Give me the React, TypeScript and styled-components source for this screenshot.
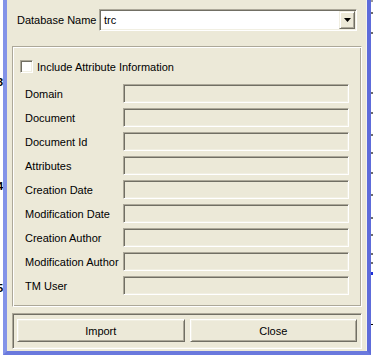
import React from 'react';
import styled, { createGlobalStyle } from 'styled-components';

const GlobalStyle = createGlobalStyle`
  html, body {
    margin: 0;
    padding: 0;
    background: #fff;
  }
  body {
    font-family: "Liberation Sans", Arial, sans-serif;
    font-size: 11px;
    color: #000;
  }
`;

const Screen = styled.div`
  display: flex;
  align-items: flex-start;
  width: 373px;
  height: 358px;
  overflow: hidden;
  background: #fff;
`;

// strip of the window behind, on the left
const Gutter = styled.div`
  width: 3px;
  flex: none;
  display: flex;
  flex-direction: column;
  align-items: flex-end;
  overflow: hidden;
`;

const GutterDigit = styled.span<{ $mt: number }>`
  margin-top: ${p => p.$mt}px;
  font: bold 11px/12px "Liberation Sans", Arial, sans-serif;
  white-space: nowrap;
`;

// strip of the window behind, on the right
const BackStrip = styled.div`
  width: 2px;
  flex: none;
  display: flex;
  flex-direction: column;
`;

const BackMark = styled.span<{ $mt: number; $color?: string; $h?: number }>`
  display: block;
  margin-top: ${p => p.$mt}px;
  height: ${p => p.$h ?? 2}px;
  background: ${p => p.$color ?? '#6d6d6d'};
`;

const Window = styled.div`
  width: 368px;
  height: 355px;
  flex: none;
  box-sizing: border-box;
  border-left: 4px solid #8393e8;
  border-right: 4px solid #5e6cda;
  border-bottom: 4px solid #6a79dd;
  background: #ece9d8;
  display: flex;
  flex-direction: column;
  box-shadow: inset -1px 0 0 #f4f3ee;
`;

const TopRow = styled.div`
  display: flex;
  align-items: center;
  height: 22px;
  margin-top: 9px;
  padding: 0 10px;
`;

const TopLabel = styled.span`
  width: 82px;
  flex: none;
  white-space: nowrap;
`;

const Combo = styled.div`
  flex: 1;
  height: 22px;
  box-sizing: border-box;
  display: flex;
  align-items: center;
  padding: 1px 1px 1px 4px;
  background: #fff;
  border-top: 1px solid #aca899;
  border-left: 1px solid #aca899;
  border-bottom: 1px solid #fff;
  border-right: 1px solid #fff;
  box-shadow: inset 1px 1px 0 #716f64, inset -1px -1px 0 #f1efe2;
`;

const ComboText = styled.span`
  flex: 1;
`;

const ArrowButton = styled.div`
  width: 16px;
  height: 18px;
  box-sizing: border-box;
  display: flex;
  align-items: center;
  justify-content: center;
  background: #ece9d8;
  border-top: 1px solid #f1efe2;
  border-left: 1px solid #f1efe2;
  border-bottom: 1px solid #716f64;
  border-right: 1px solid #716f64;
  box-shadow: inset 1px 1px 0 #fff, inset -1px -1px 0 #aca899;
`;

const EtchedGroup = styled.div`
  height: 261px;
  margin: 15px 5px 0;
  box-sizing: border-box;
  border-top: 1px solid #aca899;
  border-left: 1px solid #aca899;
  border-bottom: 1px solid #fff;
  border-right: 1px solid #fff;
  box-shadow: inset 1px 1px 0 #fff, inset -1px -1px 0 #aca899;
  padding: 13px 12px 0 7px;
`;

const CheckRow = styled.label`
  display: flex;
  align-items: center;
  gap: 4px;
  height: 13px;
`;

const CheckBox = styled.span`
  width: 13px;
  height: 13px;
  flex: none;
  box-sizing: border-box;
  background: #fff;
  border-top: 1px solid #aca899;
  border-left: 1px solid #aca899;
  border-bottom: 1px solid #fff;
  border-right: 1px solid #fff;
  box-shadow: inset 1px 1px 0 #716f64, inset -1px -1px 0 #f1efe2;
`;

const FieldList = styled.div`
  display: flex;
  flex-direction: column;
  gap: 5px;
  margin-top: 11px;
  padding-left: 5px;
`;

const FieldRow = styled.div`
  display: flex;
  align-items: center;
  height: 19px;
`;

const FieldLabel = styled.span`
  width: 98px;
  flex: none;
  white-space: nowrap;
`;

const Field = styled.div`
  flex: 1;
  height: 19px;
  box-sizing: border-box;
  background: #ece9d8;
  border-top: 1px solid #aca899;
  border-left: 1px solid #aca899;
  border-bottom: 1px solid #fff;
  border-right: 1px solid #fff;
  box-shadow: inset 1px 1px 0 #716f64, inset -1px -1px 0 #f1efe2;
`;

const ButtonGroup = styled.div`
  height: 36px;
  margin: 6px 5px 0;
  box-sizing: border-box;
  display: flex;
  gap: 5px;
  padding: 5px 4px 4px;
  border-top: 1px solid #aca899;
  border-left: 1px solid #aca899;
  border-bottom: 1px solid #fff;
  border-right: 1px solid #fff;
  box-shadow: inset 1px 1px 0 #716f64, inset -1px -1px 0 #f1efe2;
`;

const Button = styled.button`
  flex: 1;
  height: 23px;
  box-sizing: border-box;
  margin: 0;
  padding: 0;
  font: 11px "Liberation Sans", Arial, sans-serif;
  color: #000;
  background: #ece9d8;
  border-top: 1px solid #fff;
  border-left: 1px solid #fff;
  border-bottom: 1px solid #716f64;
  border-right: 1px solid #716f64;
  box-shadow: inset 1px 1px 0 #f1efe2, inset -1px -1px 0 #aca899;
  border-radius: 0;
`;

const fields = [
  'Domain',
  'Document',
  'Document Id',
  'Attributes',
  'Creation Date',
  'Modification Date',
  'Creation Author',
  'Modification Author',
  'TM User',
];

export default function App() {
  return (
    <>
      <GlobalStyle />
      <Screen>
        <Gutter>
          <GutterDigit $mt={76}>3</GutterDigit>
          <GutterDigit $mt={92}>4</GutterDigit>
          <GutterDigit $mt={90}>5</GutterDigit>
        </Gutter>
        <Window>
          <TopRow>
            <TopLabel>Database Name</TopLabel>
            <Combo>
              <ComboText>trc</ComboText>
              <ArrowButton>
                <svg width="7" height="4" viewBox="0 0 7 4">
                  <path d="M0 0h7L3.5 4z" fill="#000" />
                </svg>
              </ArrowButton>
            </Combo>
          </TopRow>
          <EtchedGroup>
            <CheckRow>
              <CheckBox />
              <span>Include Attribute Information</span>
            </CheckRow>
            <FieldList>
              {fields.map(f => (
                <FieldRow key={f}>
                  <FieldLabel>{f}</FieldLabel>
                  <Field />
                </FieldRow>
              ))}
            </FieldList>
          </EtchedGroup>
          <ButtonGroup>
            <Button>Import</Button>
            <Button>Close</Button>
          </ButtonGroup>
        </Window>
        <BackStrip>
          <BackMark $mt={0} $color="#9a9a9a" />
          <BackMark $mt={10} />
          <BackMark $mt={18} />
          <BackMark $mt={58} />
          <BackMark $mt={18} />
          <BackMark $mt={20} />
          <BackMark $mt={16} />
          <BackMark $mt={18} />
          <BackMark $mt={20} />
          <BackMark $mt={21} />
          <BackMark $mt={15} />
          <BackMark $mt={17} />
          <BackMark $mt={7} />
          <BackMark $mt={8} $color="#1d2fd8" $h={3} />
          <BackMark $mt={49} $color="#000" $h={1} />
        </BackStrip>
      </Screen>
    </>
  );
}
